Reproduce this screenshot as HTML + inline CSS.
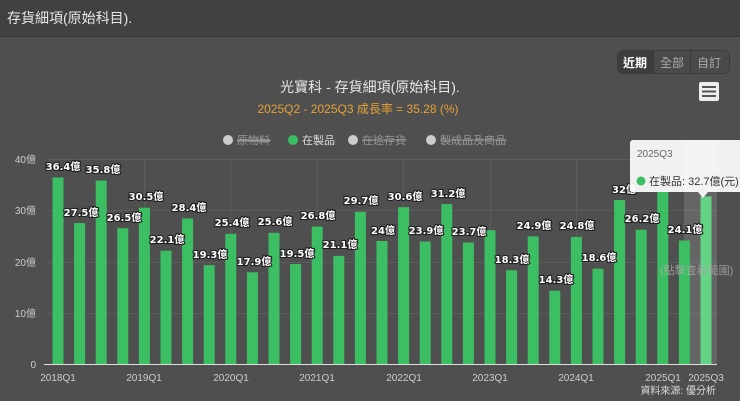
<!DOCTYPE html>
<html><head><meta charset="utf-8"><style>
body{margin:0;width:740px;height:401px;overflow:hidden;background:#4f4f4f;font-family:"Liberation Sans","Noto Sans CJK TC",sans-serif}
</style></head><body>
<svg width="740" height="401" xmlns="http://www.w3.org/2000/svg" style="position:absolute;left:0;top:0;font-family:'Liberation Sans','Noto Sans CJK TC',sans-serif">
<rect x="0" y="0" width="740" height="36" fill="#414141"/>
<rect x="0" y="36" width="740" height="1" fill="#333"/>
<text x="7" y="23" font-size="14" fill="#e8e8e8">存貨細項(原始科目).</text>
<!-- buttons -->
<rect x="617.5" y="50.5" width="112" height="23" rx="6" fill="#4a4a4a" stroke="#3a3a3a"/>
<path d="M623.5 50.5h30v23h-30a6 6 0 0 1-6-6v-11a6 6 0 0 1 6-6z" fill="#3d3d3d"/>
<line x1="653.5" y1="51" x2="653.5" y2="73" stroke="#3a3a3a"/>
<line x1="690.5" y1="51" x2="690.5" y2="73" stroke="#3a3a3a"/>
<text x="635" y="67" font-size="12" fill="#fff" text-anchor="middle" font-weight="bold">近期</text>
<text x="672" y="67" font-size="12" fill="#aaa" text-anchor="middle">全部</text>
<text x="709" y="67" font-size="12" fill="#aaa" text-anchor="middle">自訂</text>
<rect x="699" y="82" width="20" height="19" rx="2" fill="#eee"/>
<rect x="702" y="86" width="14" height="2" fill="#555"/><rect x="702" y="90.5" width="14" height="2" fill="#555"/><rect x="702" y="95" width="14" height="2" fill="#555"/>
<text x="370" y="92" font-size="14" fill="#e8e8e8" text-anchor="middle">光寶科 - 存貨細項(原始科目).</text>
<text x="358" y="113" font-size="12" fill="#e8a235" text-anchor="middle">2025Q2 - 2025Q3 成長率 = 35.28 (%)</text>
<!-- legend -->
<g font-size="11">
<circle cx="228" cy="140" r="5" fill="#ccc"/><text x="237" y="144" fill="#999" text-decoration="line-through">原物料</text>
<line x1="237" y1="140" x2="271" y2="140" stroke="#999"/>
<circle cx="293" cy="140" r="5" fill="#3cbf63"/><text x="302" y="144" fill="#ddd">在製品</text>
<circle cx="353" cy="140" r="5" fill="#ccc"/><text x="362" y="144" fill="#999">在途存貨</text>
<line x1="362" y1="140" x2="407" y2="140" stroke="#999"/>
<circle cx="431" cy="140" r="5" fill="#ccc"/><text x="440" y="144" fill="#999">製成品及商品</text>
<line x1="440" y1="140" x2="507" y2="140" stroke="#999"/>
</g>
<!-- grid -->
<g stroke="#5c5c5c" stroke-width="1">
<line x1="48" y1="159.5" x2="717" y2="159.5"/><line x1="48" y1="210.5" x2="717" y2="210.5"/>
<line x1="48" y1="262.5" x2="717" y2="262.5"/><line x1="48" y1="313.5" x2="717" y2="313.5"/>
<line x1="144.5" y1="159" x2="144.5" y2="364"/><line x1="230.5" y1="159" x2="230.5" y2="364"/>
<line x1="317.5" y1="159" x2="317.5" y2="364"/><line x1="403.5" y1="159" x2="403.5" y2="364"/>
<line x1="490.5" y1="159" x2="490.5" y2="364"/><line x1="576.5" y1="159" x2="576.5" y2="364"/>
<line x1="663.5" y1="159" x2="663.5" y2="364"/>
</g>
<g font-size="10" fill="#ccc" text-anchor="end">
<text x="36" y="163">40億</text><text x="36" y="214">30億</text><text x="36" y="266">20億</text><text x="36" y="317">10億</text><text x="36" y="368">0</text>
</g>
<rect x="684" y="140" width="33" height="224" fill="#ffffff" opacity="0.13"/>
<!-- bars -->
<g fill="#3cbf63">
<rect x="52.5" y="177.5" width="11" height="186.5"/>
<rect x="74.1" y="223.1" width="11" height="140.9"/>
<rect x="95.7" y="180.5" width="11" height="183.5"/>
<rect x="117.3" y="228.2" width="11" height="135.8"/>
<rect x="138.9" y="207.7" width="11" height="156.3"/>
<rect x="160.5" y="250.7" width="11" height="113.3"/>
<rect x="182.1" y="218.4" width="11" height="145.6"/>
<rect x="203.7" y="265.1" width="11" height="98.9"/>
<rect x="225.3" y="233.8" width="11" height="130.2"/>
<rect x="246.9" y="272.3" width="11" height="91.7"/>
<rect x="268.5" y="232.8" width="11" height="131.2"/>
<rect x="290.1" y="264.1" width="11" height="99.9"/>
<rect x="311.7" y="226.6" width="11" height="137.4"/>
<rect x="333.3" y="255.9" width="11" height="108.1"/>
<rect x="354.9" y="211.8" width="11" height="152.2"/>
<rect x="376.5" y="241" width="11" height="123"/>
<rect x="398.1" y="207.2" width="11" height="156.8"/>
<rect x="419.7" y="241.5" width="11" height="122.5"/>
<rect x="441.3" y="204.1" width="11" height="159.9"/>
<rect x="462.9" y="242.5" width="11" height="121.5"/>
<rect x="484.5" y="230.2" width="11" height="133.8"/>
<rect x="506.1" y="270.2" width="11" height="93.8"/>
<rect x="527.7" y="236.4" width="11" height="127.6"/>
<rect x="549.3" y="290.7" width="11" height="73.3"/>
<rect x="570.9" y="236.9" width="11" height="127.1"/>
<rect x="592.5" y="268.7" width="11" height="95.3"/>
<rect x="614.1" y="200" width="11" height="164"/>
<rect x="635.7" y="229.7" width="11" height="134.3"/>
<rect x="657.3" y="191.8" width="11" height="172.2"/>
<rect x="678.9" y="240.5" width="11" height="123.5"/>
<rect x="700.5" y="196.4" width="11" height="167.6" fill="#63d486"/>
</g>
<line x1="44" y1="364.5" x2="717" y2="364.5" stroke="#ddd" stroke-width="1"/>
<!-- labels -->
<g font-size="10" font-weight="bold" fill="#fff" stroke="#222" stroke-width="2.2" paint-order="stroke" text-anchor="middle" font-family="'DejaVu Sans','Noto Sans CJK TC',sans-serif">
<text x="63" y="170">36.4億</text>
<text x="81" y="216">27.5億</text>
<text x="103" y="173">35.8億</text>
<text x="124" y="221">26.5億</text>
<text x="146" y="200">30.5億</text>
<text x="167" y="243">22.1億</text>
<text x="189" y="211">28.4億</text>
<text x="210" y="258">19.3億</text>
<text x="232" y="226">25.4億</text>
<text x="254" y="265">17.9億</text>
<text x="275" y="225">25.6億</text>
<text x="297" y="257">19.5億</text>
<text x="318" y="219">26.8億</text>
<text x="340" y="248">21.1億</text>
<text x="361" y="204">29.7億</text>
<text x="383" y="234">24億</text>
<text x="405" y="200">30.6億</text>
<text x="426" y="234">23.9億</text>
<text x="448" y="197">31.2億</text>
<text x="469" y="235">23.7億</text>
<text x="512" y="263">18.3億</text>
<text x="534" y="229">24.9億</text>
<text x="556" y="283">14.3億</text>
<text x="577" y="229">24.8億</text>
<text x="599" y="261">18.6億</text>
<text x="624" y="193">32億</text>
<text x="642" y="222">26.2億</text>
<text x="685" y="233">24.1億</text>
</g>
<text x="660" y="274" font-size="11" fill="#aaa" opacity="0.8">(點擊查看範圍)</text>
<!-- x labels -->
<g font-size="10" fill="#ccc" text-anchor="middle">
<text x="58" y="381">2018Q1</text><text x="144" y="381">2019Q1</text><text x="231" y="381">2020Q1</text>
<text x="317" y="381">2021Q1</text><text x="404" y="381">2022Q1</text><text x="490" y="381">2023Q1</text>
<text x="576" y="381">2024Q1</text><text x="663" y="381">2025Q1</text><text x="706" y="381">2025Q3</text>
</g>
<text x="716" y="394" font-size="10" fill="#ddd" text-anchor="end">資料來源: 優分析</text>
<!-- tooltip -->
<path d="M633 140h110v52h-35l-5 6-5-6h-65a3 3 0 0 1-3-3v-46a3 3 0 0 1 3-3z" fill="#fff" opacity="0.92"/>
<text x="637" y="157" font-size="10" fill="#666">2025Q3</text>
<circle cx="641" cy="181" r="4.5" fill="#3cbf63"/>
<text x="649" y="185" font-size="11" fill="#333">在製品: 32.7億(元)</text>
</svg>
</body></html>
